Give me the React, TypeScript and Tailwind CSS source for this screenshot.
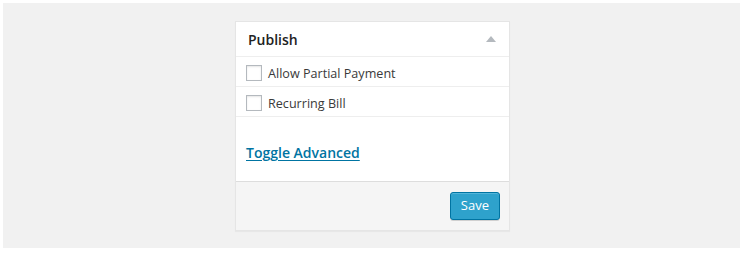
import { useState } from 'react';

const Row = ({ label }: { label: string }) => {
  const [checked, setChecked] = useState(false);
  return (
    <label className="flex items-center h-[30px] pt-[2px] px-[10px] border-b border-[#eeeeee] cursor-pointer">
      <span
        onClick={() => setChecked(!checked)}
        className="w-4 h-4 border border-[#b4b9be] bg-white shadow-[inset_0_1px_2px_rgba(0,0,0,0.1)] mr-[6px] flex items-center justify-center"
      >
        {checked && <span className="text-[#1e8cbe] text-xs leading-none">✓</span>}
      </span>
      <span className="text-[12.6px] text-[#3a3a3a] mt-[3px]">{label}</span>
    </label>
  );
};

const App = () => {
  return (
    <div className="w-[746px] h-[254px] bg-white p-[3px]" style={{ fontFamily: '"Open Sans", sans-serif' }}>
      <div className="w-[737px] h-[245px] bg-[#f1f1f1] flex justify-center pt-[18px]">
        <div className="w-[275px] h-[210px] ml-[2px] bg-white border border-[#e5e5e5] shadow-[0_1px_1px_rgba(0,0,0,0.04)] flex flex-col">
          {/* Header */}
          <div className="h-[35px] flex items-center justify-between pl-[12px] pr-[12px] border-b border-[#eeeeee]">
            <h2 className="text-[14px] font-semibold text-[#222222]">Publish</h2>
            <svg width="10" height="6" viewBox="0 0 10 6" className="mr-[1px]">
              <polygon points="5,0 10,6 0,6" fill="#b4b9be" />
            </svg>
          </div>

          <Row label="Allow Partial Payment" />
          <Row label="Recurring Bill" />

          <div className="h-[65px] flex items-center px-[10px] border-b border-[#dddddd] pt-[7px]">
            <a href="#" className="text-[14px] font-semibold text-[#0074a2] underline underline-offset-2">
              Toggle Advanced
            </a>
          </div>

          <div className="flex-1 bg-[#f5f5f5] flex justify-end items-start pt-[10px] pr-[9px]">
            <button className="h-[28px] px-[10px] bg-[#2ea2cc] border border-[#0074a2] rounded-[3px] text-white text-[13px] shadow-[inset_0_1px_0_rgba(120,200,230,0.5),0_1px_0_rgba(0,0,0,0.15)]">
              Save
            </button>
          </div>
        </div>
      </div>
    </div>
  );
};

export default App;
